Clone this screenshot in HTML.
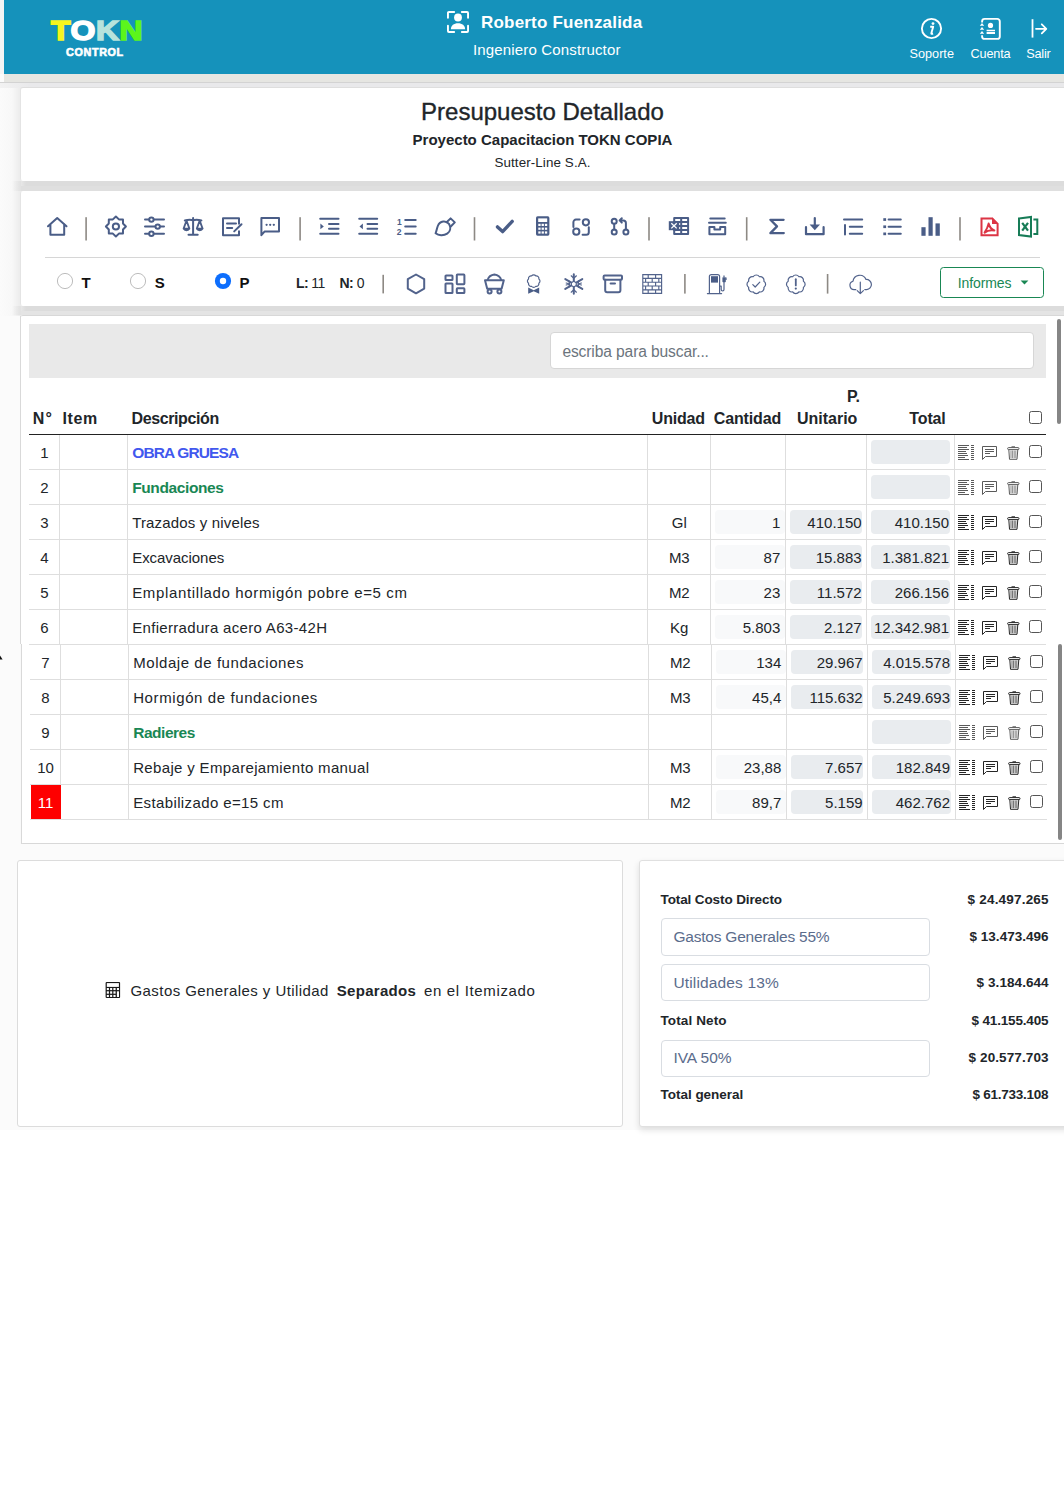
<!DOCTYPE html>
<html><head><meta charset="utf-8">
<style>
*{box-sizing:border-box;}
html,body{margin:0;padding:0;}
body{width:1064px;height:1500px;overflow:hidden;position:relative;background:#fff;font-family:"Liberation Sans",sans-serif;color:#212529;}
.abs{position:absolute;}
.t{position:absolute;white-space:nowrap;line-height:1;}
#bgpage{left:0;top:74px;width:1064px;height:1056px;background:#fbfbfb;}
#hdr{left:4px;top:0;width:1060px;height:74px;background:#1592bb;}
.card{background:#fff;border-radius:3px;}
#c1{left:20px;top:87px;width:1060px;height:94px;border-left:1px solid #e4e4e4;border-top:1px solid #dedede;}
#c2{left:20px;top:191px;width:1060px;height:115px;border-left:1px solid #e4e4e4;}
#c3{left:20px;top:315px;width:1060px;height:529px;border:1px solid #d8d8d8;border-left:none;border-right:none;}
#c4{left:17px;top:860px;width:606px;height:267px;border:1px solid #dcdcdc;}
#c5{left:639px;top:860px;width:440px;height:267px;border:1px solid #e0e0e0;box-shadow:0 3px 6px rgba(0,0,0,.12);}
svg{position:absolute;overflow:visible;}
.ic{fill:none;stroke:#4a5d87;stroke-width:2;stroke-linecap:round;stroke-linejoin:round;}
.icf{fill:#4a5d87;stroke:none;}
.div{position:absolute;width:2px;background:#8c8a88;}
</style></head>
<body>
<div id="bgpage" class="abs"></div>
<div class="abs" style="left:0;top:0;width:4px;height:74px;background:#f4f4f4;"></div>
<div class="abs" style="left:4px;top:74px;width:1060px;height:8px;background:#e6e6e2;"></div>
<div class="abs" style="left:0;top:82px;width:1064px;height:1px;background:#d3d3d3;"></div>
<div class="abs" style="left:0;top:83px;width:1064px;height:5px;background:linear-gradient(90deg,#f2f2f2 0,#e9e9eb 30px);"></div>
<div class="abs" style="left:0;top:88px;width:21px;height:228px;background:linear-gradient(90deg,#fbfbfb 0,#f8f8f8 12px,#ececec 20px);"></div>
<div class="abs" style="left:12px;top:181px;width:1052px;height:10px;background:linear-gradient(90deg,rgba(220,220,220,0) 0,#dcdcdc 14px);"></div><div class="abs" style="left:21px;top:186px;width:1043px;height:5px;background:#dfdfdf;"></div>
<div class="abs" style="left:12px;top:306px;width:1052px;height:9px;background:linear-gradient(90deg,rgba(220,220,220,0) 0,#dcdcdc 14px);"></div><div class="abs" style="left:21px;top:311px;width:1043px;height:4px;background:#e4e4e4;"></div>

<div id="hdr" class="abs">
 <!-- logo -->
 <div class="t" style="left:47px;top:17px;font-size:28px;font-weight:bold;letter-spacing:0.5px;-webkit-text-stroke:1.6px currentColor;transform:scaleX(1.14);transform-origin:0 0;">
  <span style="color:#f5f51e;-webkit-text-stroke-color:#f5f51e">T</span><span style="color:#fff;-webkit-text-stroke-color:#fff">O</span><span style="color:#b8e3dc;-webkit-text-stroke-color:#b8e3dc">K</span><span style="color:#5cf51c;-webkit-text-stroke-color:#5cf51c">N</span></div>
 <div class="t" style="left:62px;top:48px;font-size:10.2px;font-weight:bold;color:#fff;letter-spacing:0.6px;-webkit-text-stroke:0.6px #fff;transform:scaleX(1.06);transform-origin:0 0;">CONTROL</div>
 <!-- user icon -->
 <svg style="left:442.5px;top:10.5px" width="22" height="22" viewBox="0.5 0.5 23 23">
  <path d="M1.5 7.5V2.5a1 1 0 0 1 1-1H8 M16 1.5h5.5a1 1 0 0 1 1 1V7.5 M22.5 16v5.5a1 1 0 0 1-1 1H16 M8 22.5H2.5a1 1 0 0 1-1-1V16" fill="none" stroke="#fff" stroke-width="2" stroke-linecap="round"/>
  <circle cx="12" cy="7.3" r="4.1" fill="#fff"/>
  <path d="M4.6 19.6c0-3.9 3-6.2 7.4-6.2s7.4 2.3 7.4 6.2z" fill="#fff"/>
 </svg>
 <div class="t" style="left:477px;top:14px;font-size:17px;font-weight:bold;color:#fff;letter-spacing:0.2px;">Roberto Fuenzalida</div>
 <div class="t" style="left:469px;top:42px;font-size:15px;color:#fff;letter-spacing:0.16px;">Ingeniero Constructor</div>
 <!-- info -->
 <svg style="left:917px;top:18px" width="22" height="22" viewBox="0 0 22 22">
  <circle cx="10.5" cy="10.5" r="9.6" fill="none" stroke="#fff" stroke-width="1.9"/>
  <circle cx="12" cy="5.6" r="1.4" fill="#fff"/>
  <path d="M9.2 8.8h3l-1.8 6.2c-.2.7.1 1 .8.9l.9-.2" fill="none" stroke="#fff" stroke-width="1.9" stroke-linejoin="round"/>
 </svg>
 <div class="t" style="left:905.5px;top:47.8px;font-size:12.7px;color:#fff;">Soporte</div>
 <!-- cuenta -->
 <svg style="left:976px;top:18px" width="22" height="22" viewBox="0 0 22 22">
  <path d="M2.1 4.4V3.4a2.5 2.5 0 0 1 2.5-2.5h12.7a2.5 2.5 0 0 1 2.5 2.5v15a2.5 2.5 0 0 1-2.5 2.5H4.6a2.5 2.5 0 0 1-2.5-2.5v-1.2" fill="none" stroke="#fff" stroke-width="1.9"/>
  <path d="M2 4.9l2.2 2.9H-0.2z M2 8.9l2.2 2.9H-0.2z M2 13l2.2 2.7H-0.2z" fill="#fff"/>
  <circle cx="10.5" cy="7.4" r="2.6" fill="#fff"/>
  <path d="M6.6 11.8h8.4v1.5H6.6z M6.6 14h8.4v2H6.6z" fill="#fff"/>
 </svg>
 <div class="t" style="left:966.5px;top:47.8px;font-size:12.7px;color:#fff;letter-spacing:-0.15px;">Cuenta</div>
 <!-- salir -->
 <svg style="left:1027px;top:18px" width="22" height="22" viewBox="0 0 22 22">
  <path d="M1.5 1.2v18.4" fill="none" stroke="#fff" stroke-width="1.8"/>
  <path d="M5 10.8h9.8 M10.8 6.3l4.5 4.5-4.5 4.5" fill="none" stroke="#fff" stroke-width="1.8" stroke-linecap="round" stroke-linejoin="round"/>
 </svg>
 <div class="t" style="left:1022.2px;top:47.8px;font-size:12.7px;color:#fff;letter-spacing:-0.2px;">Salir</div>
</div>
<div id="c1" class="abs card">
  <div class="t" style="left:0;width:1043px;text-align:center;top:11.8px;font-size:24px;-webkit-text-stroke:0.35px #212529;">Presupuesto Detallado</div>
  <div class="t" style="left:0;width:1043px;text-align:center;top:44px;font-size:15px;font-weight:bold;">Proyecto Capacitacion TOKN COPIA</div>
  <div class="t" style="left:0;width:1043px;text-align:center;top:68px;font-size:13.4px;letter-spacing:0.1px;">Sutter-Line S.A.</div>
</div>
<div id="c2" class="abs card"></div>
<div class="abs" style="left:45px;top:257px;width:995px;height:1px;background:#d6d6d6;"></div>
<svg style="left:0;top:0" width="1064" height="320" viewBox="0 0 1064 320">
 <g fill="#8d8984">
  <rect x="85.3" y="217.2" width="1.6" height="23.3"/>
  <rect x="299.3" y="217.2" width="1.6" height="23.3"/>
  <rect x="473.7" y="217.2" width="1.6" height="23.3"/>
  <rect x="648.2" y="217.2" width="1.6" height="23.3"/>
  <rect x="745.9" y="217.2" width="1.6" height="23.3"/>
  <rect x="959.2" y="217.2" width="1.6" height="23.3"/>
  <rect x="382.4" y="274.8" width="1.6" height="18.6"/>
  <rect x="684.1" y="274.0" width="1.6" height="19.6"/>
  <rect x="826.8" y="274.0" width="1.6" height="19.6"/>
 </g>
 <g class="ic">
  <!-- home -->
  <path d="M48 226.3L57.2 218.1L66.5 226.3 M50.4 224V234.8H64.2V224"/>
  <!-- gear -->
  <path d="M115.90 216.50 L118.92 219.40 L122.98 219.42 L123.00 223.48 L125.90 226.50 L123.00 229.52 L122.98 233.58 L118.92 233.60 L115.90 236.50 L112.88 233.60 L108.82 233.58 L108.80 229.52 L105.90 226.50 L108.80 223.48 L108.82 219.42 L112.88 219.40Z"/>
  <circle cx="115.9" cy="226.5" r="3.1"/>
  <!-- sliders -->
  <path d="M145 219.6H164 M145 226.6H164 M145 233.7H164"/>
  <circle cx="151.4" cy="219.6" r="2.2" fill="#fff"/>
  <circle cx="157.7" cy="226.6" r="2.2" fill="#fff"/>
  <circle cx="151.4" cy="233.7" r="2.2" fill="#fff"/>
  <!-- scale -->
  <path d="M193.1 218V234.6 M188.5 234.8H197.7 M184.8 220.4C188 219.6 190.5 219.4 193.1 220.2C195.7 219.4 198.2 219.6 201.4 220.4"/>
  <path d="M186.5 220.6L183.6 228.6H189.4Z M199.7 220.6L196.8 228.6H202.6Z" stroke-width="1.8"/>
  <path d="M183.6 228.6C184.2 231.2 188.8 231.2 189.4 228.6Z M196.8 228.6C197.4 231.2 202 231.2 202.6 228.6Z" fill="#4a5d87" stroke-width="1.2"/>
  <!-- edit -->
  <path d="M239 223.8V218.2H223V235.3H239V231.2"/>
  <path d="M227 223.4H236 M227 228H232.2"/>
  <path d="M234.2 231.4L241.5 224.2"/>
  <!-- chat -->
  <path d="M261.4 235.2V218H279V231.6H264.5Z"/>
  <circle cx="266.6" cy="224.8" r="1.15" class="icf"/><circle cx="270.2" cy="224.8" r="1.15" class="icf"/><circle cx="273.8" cy="224.8" r="1.15" class="icf"/>
 </g>
 <g class="ic" stroke-linecap="butt" stroke-width="1.9">
  <!-- indent -->
  <path d="M320.2 218.7H338.5 M329 224.1H338.5 M329 228.8H338.5 M320.2 233.7H338.5"/>
  <path d="M320.4 223.6L323.8 226.4L320.4 229.2Z" class="icf"/>
  <!-- outdent -->
  <path d="M359.2 218.7H377.2 M367.5 224.1H377.2 M367.5 228.8H377.2 M359.2 233.7H377.2"/>
  <path d="M362.9 223.6L359.5 226.4L362.9 229.2Z" class="icf"/>
  <!-- ol -->
  <path d="M405.2 219.9H415.7 M405.2 226.6H415.7 M405.2 233.7H415.7"/>
 </g>
 <text x="397" y="224.8" font-size="8.5" font-weight="bold" fill="#4a5d87" font-family="Liberation Sans">1</text>
 <text x="396.8" y="234.8" font-size="8.5" font-weight="bold" fill="#4a5d87" font-family="Liberation Sans">2</text>
 <g class="ic">
  <!-- brush -->
  <path d="M449.2 224.2C446 220 440 220.5 437.8 226C436.8 228.6 436.6 231 435.6 233.3C438.5 235.5 443.5 236 447.2 233.6C450.2 231.6 451.2 227.8 449.2 224.2Z"/>
  <path d="M446.6 222.3L450.6 218.4L454.8 222.4L451 226.2"/>
  <!-- check -->
  <path d="M497.5 226.9L502.6 231.6L512.2 221.4" stroke-width="3.4"/>
 </g>
 <!-- calculator -->
 <rect x="536" y="216.3" width="13.4" height="19.4" rx="1.6" class="icf"/>
 <g fill="#fff">
  <rect x="538.2" y="218.4" width="9" height="3.6"/>
  <rect x="538.3" y="223.8" width="2.3" height="2.2"/><rect x="541.6" y="223.8" width="2.3" height="2.2"/><rect x="544.9" y="223.8" width="2.3" height="2.2"/>
  <rect x="538.3" y="227.6" width="2.3" height="2.2"/><rect x="541.6" y="227.6" width="2.3" height="2.2"/><rect x="544.9" y="227.6" width="2.3" height="2.2"/>
  <rect x="538.3" y="231.4" width="2.3" height="2.2"/><rect x="541.6" y="231.4" width="2.3" height="2.2"/><rect x="544.9" y="231.4" width="2.3" height="2.2"/>
 </g>
 <g class="ic">
  <!-- circles relation -->
  <circle cx="585.9" cy="222.3" r="3.1"/>
  <circle cx="576.3" cy="231.7" r="3.1"/>
  <path d="M573.4 227V222.2A2.6 2.6 0 0 1 576 219.6H579.6 M588.8 227.2V232.2A2.6 2.6 0 0 1 586.2 234.8H582.6"/>
  <!-- git pull -->
  <circle cx="614.2" cy="221.3" r="2.5"/>
  <circle cx="614.2" cy="232.1" r="2.5"/>
  <circle cx="625.9" cy="232.1" r="2.5"/>
  <path d="M614.2 223.8V229.6 M625.9 229.6V223A2.6 2.6 0 0 0 623.3 220.4H619.6 M621.8 218.2L619.6 220.4L621.8 222.6"/>
 </g>
 <!-- excel grid -->
 <g class="ic" stroke-width="1.5" stroke-linecap="butt" stroke-linejoin="miter">
  <rect x="674.2" y="217.9" width="13.9" height="16.2"/>
  <path d="M681.2 217.9V234.1 M674.2 221.9H688.1 M674.2 226H688.1 M674.2 230.1H688.1"/>
 </g>
 <rect x="668.8" y="221.2" width="10.4" height="9" class="icf"/>
 <path d="M671.3 223.2L676.7 228.4 M676.7 223.2L671.3 228.4" stroke="#fff" stroke-width="1.3"/>
 <g class="ic" stroke-linecap="butt" stroke-linejoin="miter">
  <!-- tray -->
  <path d="M710.3 218.5H724.7 M709 222.8H725.8"/>
  <path d="M709.4 227V234.3H725.2V227H720.2V229.6H714.4V227Z" stroke-width="2"/>
  <!-- sigma -->
  <path d="M783.6 219.8H770.4L777 226.4L770.4 233.1H783.8" stroke-width="2.3"/>
  <!-- download -->
  <path d="M806 227.2V234.2H823.6V227.2" stroke-width="2.2"/>
  <path d="M814.8 218V226" stroke-width="2.2"/>
 </g>
 <path d="M809.6 224.6H820L814.8 230.2Z" class="icf"/>
 <g class="ic" stroke-linecap="butt" stroke-width="1.8">
  <!-- list indent -->
  <path d="M844 219.5H862.2 M849.8 226.7H862.2 M849.8 233.8H862.2 M845 225V234.6"/>
  <!-- bullets -->
  <path d="M888.6 219.5H900.8 M888.6 226.7H900.8 M888.6 233.8H900.8"/>
 </g>
 <g class="icf">
  <rect x="883.3" y="218.2" width="2.8" height="2.7"/><rect x="883.3" y="225.4" width="2.8" height="2.7"/><rect x="883.3" y="232.5" width="2.8" height="2.7"/>
  <rect x="921.4" y="227.2" width="4.2" height="8.6"/><rect x="928.5" y="217.2" width="4.2" height="18.6"/><rect x="935.5" y="223.4" width="4.3" height="12.4"/>
 </g>
 <!-- pdf -->
 <path d="M981.5 218.5H992.3L997.6 223.8V235.2H981.5Z" fill="none" stroke="#dc3545" stroke-width="2" stroke-linejoin="miter"/>
 <path d="M992 217.6L998.5 224.1H992Z" fill="#dc3545"/>
 <path d="M988.6 223.6C989.6 227 991.6 229.4 994.4 230.4C991.4 229.9 987.6 230.2 984.6 232.6C986.5 229.6 987.9 226.8 988.6 223.6Z" fill="none" stroke="#dc3545" stroke-width="2" stroke-linejoin="round"/>
 <!-- excel -->
 <path d="M1019 218.4L1031 216.9V236.6L1019 235Z" fill="none" stroke="#177c57" stroke-width="2" stroke-linejoin="miter"/>
 <path d="M1033.4 219.6H1037.3V234H1033.4" fill="none" stroke="#177c57" stroke-width="2"/>
 <path d="M1022.2 222.8L1028 230.6 M1028 222.8L1022.2 230.6" stroke="#177c57" stroke-width="2.2"/>

 <!-- row 2 radios -->
 <circle cx="65" cy="281" r="7.6" fill="#fff" stroke="#bdbdbd" stroke-width="1"/>
 <circle cx="138" cy="281" r="7.6" fill="#fff" stroke="#bdbdbd" stroke-width="1"/>
 <circle cx="223" cy="281" r="8.1" fill="#0d6efd"/>
 <circle cx="223" cy="281" r="3.2" fill="#fff"/>
 <g class="ic" stroke-width="1.25" style="stroke:#52638c">
  <!-- hexagon -->
  <path d="M416 274.5L424.2 279.2V288.6L416 293.3L407.8 288.6V279.2Z"/>
  <!-- dashboard -->
  <rect x="445.5" y="275.4" width="7" height="4.6" rx="0.6"/>
  <rect x="445.5" y="283.4" width="7" height="9.6" rx="0.6"/>
  <rect x="456.8" y="274.6" width="7.6" height="9.6" rx="0.6"/>
  <rect x="456.8" y="288.3" width="7.6" height="4.7" rx="0.6"/>
  <!-- cart -->
  <path d="M485 280.2H503.8L501.6 288.8H487.2Z"/>
  <path d="M487.6 280C488.5 277.2 491 275 494.4 274.6C497.8 275 500.4 277.2 501.2 280"/>
  <circle cx="489.6" cy="291.6" r="2"/><circle cx="499.4" cy="291.6" r="2"/>
  <!-- award -->
  <path d="M531.56 275.93A2.60 2.60 0 0 1 535.84 275.93A2.60 2.60 0 0 1 538.87 278.96A2.60 2.60 0 0 1 538.87 283.24A2.60 2.60 0 0 1 535.84 286.27A2.60 2.60 0 0 1 531.56 286.27A2.60 2.60 0 0 1 528.53 283.24A2.60 2.60 0 0 1 528.53 278.96A2.60 2.60 0 0 1 531.56 275.93Z" stroke-width="1.2"/>
 </g>
 <path d="M528.2 287.4L533.7 290.2L539.2 287.4V293.8L533.7 291.2L528.2 293.8Z" class="icf"/>
 <g class="ic" stroke-width="1.25" style="stroke:#52638c">
  <!-- snowflake -->
  <path d="M573.8 274.2V293.8 M565.3 279.1L582.3 288.9 M565.3 288.9L582.3 279.1"/>
  <path d="M571.2 275.8L573.8 278.2L576.4 275.8 M571.2 292.2L573.8 289.8L576.4 292.2 M566.2 283L569.6 284L568.8 280.6 M581.4 285L578 284L578.8 287.4 M566.2 285L569.6 284L568.8 287.4 M581.4 283L578 284L578.8 280.6" stroke-width="1.2"/>
  <path d="M573.8 281.3L576.2 282.7V285.5L573.8 286.9L571.4 285.5V282.7Z" fill="#fff" stroke-width="1.15"/>
  <!-- archive -->
  <rect x="603.6" y="275.4" width="18.4" height="4.4" rx="1"/>
  <path d="M605.2 279.8V290.2A2 2 0 0 0 607.2 292.2H618.4A2 2 0 0 0 620.4 290.2V279.8 M610.6 283.4H615"/>
  <!-- brick -->
  <path d="M642.8 274.6H661.6V293.4H642.8Z M642.8 278.4H661.6 M642.8 282.2H661.6 M642.8 286H661.6 M642.8 289.8H661.6 M648.2 274.6V278.4 M655.6 274.6V278.4 M645.6 278.4V282.2 M652.2 278.4V282.2 M658.8 278.4V282.2 M648.2 282.2V286 M655.6 282.2V286 M645.6 286V289.8 M652.2 286V289.8 M658.8 286V289.8 M648.2 289.8V293.4 M655.6 289.8V293.4" stroke-width="1.15" stroke-linecap="butt" stroke-linejoin="miter"/>
  <!-- gas pump -->
  <path d="M709.4 293.2V276.6A2 2 0 0 1 711.4 274.6H717.6A2 2 0 0 1 719.6 276.6V293.2 M707.4 293.6H721.6" stroke-width="1.2"/>
  <path d="M719.6 286.2H721.2V289.6A1.4 1.4 0 0 0 724 289.6V281.6" stroke-width="1.2"/>
  <!-- badge check -->
  <path d="M753.16 276.72A3.70 3.70 0 0 1 759.44 276.72A3.70 3.70 0 0 1 763.88 281.16A3.70 3.70 0 0 1 763.88 287.44A3.70 3.70 0 0 1 759.44 291.88A3.70 3.70 0 0 1 753.16 291.88A3.70 3.70 0 0 1 748.72 287.44A3.70 3.70 0 0 1 748.72 281.16A3.70 3.70 0 0 1 753.16 276.72Z" stroke-width="1.2"/>
  <path d="M752.8 284.6L755.2 287L759.8 282.2" stroke-width="1.2"/>
  <!-- badge alert -->
  <path d="M792.66 276.72A3.70 3.70 0 0 1 798.94 276.72A3.70 3.70 0 0 1 803.38 281.16A3.70 3.70 0 0 1 803.38 287.44A3.70 3.70 0 0 1 798.94 291.88A3.70 3.70 0 0 1 792.66 291.88A3.70 3.70 0 0 1 788.22 287.44A3.70 3.70 0 0 1 788.22 281.16A3.70 3.70 0 0 1 792.66 276.72Z" stroke-width="1.2"/>
  <path d="M795.8 279.2V285.4" stroke-width="1.8"/>
  <!-- cloud download -->
  <path d="M855.8 289.6H854.6A4.3 4.3 0 0 1 853 281.2A6.8 6.8 0 0 1 866 279.4A4.6 4.6 0 0 1 866.6 289.6H864.8" stroke-width="1.2"/>
  <path d="M860.3 282.2V293.6 M857.2 290.6L860.3 293.6L863.4 290.6" stroke-width="1.2"/>
 </g>
 <rect x="711" y="276.2" width="7" height="6.4" class="icf"/>
 <rect x="722.4" y="277.2" width="3.4" height="5" rx="0.6" class="icf"/>
 <path d="M724 277.2V275.6 M726 280V277.6" stroke="#4a5d87" stroke-width="1.2"/>
 <circle cx="795.8" cy="288.6" r="1.1" class="icf"/>
</svg>
<div class="t" style="left:81.5px;top:274.5px;font-size:15px;font-weight:bold;color:#111;">T</div>
<div class="t" style="left:154.8px;top:274.5px;font-size:15px;font-weight:bold;color:#111;">S</div>
<div class="t" style="left:239.5px;top:274.5px;font-size:15px;font-weight:bold;color:#111;">P</div>
<div class="t" style="left:296px;top:276px;font-size:14px;color:#212529;letter-spacing:-0.6px;"><b>L:</b> 11</div>
<div class="t" style="left:339.5px;top:276px;font-size:14px;color:#212529;letter-spacing:-0.5px;"><b>N:</b> 0</div>
<div class="abs" style="left:940.2px;top:267.2px;width:103.8px;height:30.6px;border:1px solid #198754;border-radius:3.5px;"></div>
<div class="t" style="left:957.8px;top:275.6px;font-size:14px;color:#198754;letter-spacing:-0.1px;">Informes</div>
<svg style="left:1019.5px;top:279.6px" width="9" height="5" viewBox="0 0 9 5"><path d="M0.6 0.4H8.4L4.5 4.6Z" fill="#198754"/></svg>
<div id="c3" class="abs card"></div>
<div class="abs" style="left:20px;top:316px;width:1px;height:328px;background:#d9d9d9;"></div>
<div class="abs" style="left:21px;top:644px;width:1px;height:200px;background:#d9d9d9;"></div>
<div class="abs" style="left:20px;top:644px;width:1px;height:200px;background:#f9f9f9;"></div>
<div class="abs" style="left:29px;top:324px;width:1017px;height:53.7px;background:#e9e9e9;"></div>
<div class="abs" style="left:549.8px;top:332.2px;width:483.8px;height:37px;background:#fff;border:1px solid #d6d6d6;border-radius:4px;"></div>
<div class="t" style="left:562.4px;top:343.5px;font-size:15.6px;color:#6c757d;letter-spacing:-0.12px;">escriba para buscar...</div>
<div class="t" style="left:32.8px;top:410.5px;font-size:16px;font-weight:bold;color:#212529;letter-spacing:1.25px;">N°</div>
<div class="t" style="left:62.5px;top:410.5px;font-size:16px;font-weight:bold;color:#212529;letter-spacing:0.60px;">Item</div>
<div class="t" style="left:131.5px;top:410.5px;font-size:16px;font-weight:bold;color:#212529;letter-spacing:-0.39px;">Descripción</div>
<div class="t" style="left:651.8px;top:410.5px;font-size:16px;font-weight:bold;color:#212529;letter-spacing:-0.18px;">Unidad</div>
<div class="t" style="left:713.8px;top:410.5px;font-size:16px;font-weight:bold;color:#212529;letter-spacing:-0.15px;">Cantidad</div>
<div class="t" style="left:797.0px;top:410.5px;font-size:16px;font-weight:bold;color:#212529;letter-spacing:-0.01px;">Unitario</div>
<div class="t" style="left:909.3px;top:410.5px;font-size:16px;font-weight:bold;color:#212529;letter-spacing:-0.13px;">Total</div>
<div class="t" style="left:847px;top:388.5px;font-size:16px;font-weight:bold;color:#212529;">P.</div>
<div class="abs" style="left:1029.2px;top:411px;width:12.6px;height:12.6px;border:1px solid #555;border-radius:2.5px;background:#fff;"></div>
<div class="abs" style="left:29px;top:433.9px;width:1017px;height:1.3px;background:#222;"></div>
<div class="abs" style="left:29.0px;top:468.9px;width:1017px;height:1px;background:#dedede;"></div>
<div class="abs" style="left:59.0px;top:434.9px;width:1px;height:35.0px;background:#dedede;"></div>
<div class="abs" style="left:127.2px;top:434.9px;width:1px;height:35.0px;background:#dedede;"></div>
<div class="abs" style="left:647.1px;top:434.9px;width:1px;height:35.0px;background:#dedede;"></div>
<div class="abs" style="left:710.1px;top:434.9px;width:1px;height:35.0px;background:#dedede;"></div>
<div class="abs" style="left:785.1px;top:434.9px;width:1px;height:35.0px;background:#dedede;"></div>
<div class="abs" style="left:866.2px;top:434.9px;width:1px;height:35.0px;background:#dedede;"></div>
<div class="abs" style="left:954.1px;top:434.9px;width:1px;height:35.0px;background:#dedede;"></div>
<div class="t" style="left:29.5px;width:30px;text-align:center;top:445.2px;font-size:15px;color:#212529;">1</div>
<div class="t" style="left:132.2px;top:444.9px;font-size:15.5px;font-weight:bold;color:#4158ee;letter-spacing:-0.86px;">OBRA GRUESA</div>
<div class="abs" style="left:871.0px;top:440.0px;width:78.8px;height:24px;background:#e9ecef;border-radius:4px;"></div>
<div class="abs" style="left:1029.2px;top:445.2px;width:12.6px;height:12.6px;border:1px solid #555;border-radius:2.5px;background:#fff;"></div>
<div class="abs" style="left:29.0px;top:503.9px;width:1017px;height:1px;background:#dedede;"></div>
<div class="abs" style="left:59.0px;top:469.9px;width:1px;height:35.0px;background:#dedede;"></div>
<div class="abs" style="left:127.2px;top:469.9px;width:1px;height:35.0px;background:#dedede;"></div>
<div class="abs" style="left:647.1px;top:469.9px;width:1px;height:35.0px;background:#dedede;"></div>
<div class="abs" style="left:710.1px;top:469.9px;width:1px;height:35.0px;background:#dedede;"></div>
<div class="abs" style="left:785.1px;top:469.9px;width:1px;height:35.0px;background:#dedede;"></div>
<div class="abs" style="left:866.2px;top:469.9px;width:1px;height:35.0px;background:#dedede;"></div>
<div class="abs" style="left:954.1px;top:469.9px;width:1px;height:35.0px;background:#dedede;"></div>
<div class="t" style="left:29.5px;width:30px;text-align:center;top:480.2px;font-size:15px;color:#212529;">2</div>
<div class="t" style="left:132.2px;top:479.9px;font-size:15.5px;font-weight:bold;color:#198754;letter-spacing:-0.39px;">Fundaciones</div>
<div class="abs" style="left:871.0px;top:475.0px;width:78.8px;height:24px;background:#e9ecef;border-radius:4px;"></div>
<div class="abs" style="left:1029.2px;top:480.2px;width:12.6px;height:12.6px;border:1px solid #555;border-radius:2.5px;background:#fff;"></div>
<div class="abs" style="left:29.0px;top:538.9px;width:1017px;height:1px;background:#dedede;"></div>
<div class="abs" style="left:59.0px;top:504.9px;width:1px;height:35.0px;background:#dedede;"></div>
<div class="abs" style="left:127.2px;top:504.9px;width:1px;height:35.0px;background:#dedede;"></div>
<div class="abs" style="left:647.1px;top:504.9px;width:1px;height:35.0px;background:#dedede;"></div>
<div class="abs" style="left:710.1px;top:504.9px;width:1px;height:35.0px;background:#dedede;"></div>
<div class="abs" style="left:785.1px;top:504.9px;width:1px;height:35.0px;background:#dedede;"></div>
<div class="abs" style="left:866.2px;top:504.9px;width:1px;height:35.0px;background:#dedede;"></div>
<div class="abs" style="left:954.1px;top:504.9px;width:1px;height:35.0px;background:#dedede;"></div>
<div class="t" style="left:29.5px;width:30px;text-align:center;top:515.2px;font-size:15px;color:#212529;">3</div>
<div class="t" style="left:132.2px;top:515.2px;font-size:15px;color:#212529;letter-spacing:0.16px;">Trazados y niveles</div>
<div class="t" style="left:647.8px;width:63px;text-align:center;top:515.2px;font-size:15px;">Gl</div>
<div class="abs" style="left:714.5px;top:510.0px;width:70px;height:24px;background:#f8f9fa;border-radius:4px;"></div>
<div class="t" style="left:700.3px;width:80px;text-align:right;top:515.2px;font-size:15px;">1</div>
<div class="abs" style="left:790.0px;top:510.0px;width:72.3px;height:24px;background:#e9ecef;border-radius:4px;"></div>
<div class="t" style="left:771.6px;width:90px;text-align:right;top:515.2px;font-size:15px;">410.150</div>
<div class="abs" style="left:871.0px;top:510.0px;width:78.8px;height:24px;background:#e9ecef;border-radius:4px;"></div>
<div class="t" style="left:849.0px;width:100px;text-align:right;top:515.2px;font-size:15px;">410.150</div>
<div class="abs" style="left:1029.2px;top:515.2px;width:12.6px;height:12.6px;border:1px solid #555;border-radius:2.5px;background:#fff;"></div>
<div class="abs" style="left:29.0px;top:573.9px;width:1017px;height:1px;background:#dedede;"></div>
<div class="abs" style="left:59.0px;top:539.9px;width:1px;height:35.0px;background:#dedede;"></div>
<div class="abs" style="left:127.2px;top:539.9px;width:1px;height:35.0px;background:#dedede;"></div>
<div class="abs" style="left:647.1px;top:539.9px;width:1px;height:35.0px;background:#dedede;"></div>
<div class="abs" style="left:710.1px;top:539.9px;width:1px;height:35.0px;background:#dedede;"></div>
<div class="abs" style="left:785.1px;top:539.9px;width:1px;height:35.0px;background:#dedede;"></div>
<div class="abs" style="left:866.2px;top:539.9px;width:1px;height:35.0px;background:#dedede;"></div>
<div class="abs" style="left:954.1px;top:539.9px;width:1px;height:35.0px;background:#dedede;"></div>
<div class="t" style="left:29.5px;width:30px;text-align:center;top:550.2px;font-size:15px;color:#212529;">4</div>
<div class="t" style="left:132.2px;top:550.2px;font-size:15px;color:#212529;letter-spacing:-0.05px;">Excavaciones</div>
<div class="t" style="left:647.8px;width:63px;text-align:center;top:550.2px;font-size:15px;">M3</div>
<div class="abs" style="left:714.5px;top:545.0px;width:70px;height:24px;background:#f8f9fa;border-radius:4px;"></div>
<div class="t" style="left:700.3px;width:80px;text-align:right;top:550.2px;font-size:15px;">87</div>
<div class="abs" style="left:790.0px;top:545.0px;width:72.3px;height:24px;background:#e9ecef;border-radius:4px;"></div>
<div class="t" style="left:771.6px;width:90px;text-align:right;top:550.2px;font-size:15px;">15.883</div>
<div class="abs" style="left:871.0px;top:545.0px;width:78.8px;height:24px;background:#e9ecef;border-radius:4px;"></div>
<div class="t" style="left:849.0px;width:100px;text-align:right;top:550.2px;font-size:15px;">1.381.821</div>
<div class="abs" style="left:1029.2px;top:550.2px;width:12.6px;height:12.6px;border:1px solid #555;border-radius:2.5px;background:#fff;"></div>
<div class="abs" style="left:29.0px;top:608.9px;width:1017px;height:1px;background:#dedede;"></div>
<div class="abs" style="left:59.0px;top:574.9px;width:1px;height:35.0px;background:#dedede;"></div>
<div class="abs" style="left:127.2px;top:574.9px;width:1px;height:35.0px;background:#dedede;"></div>
<div class="abs" style="left:647.1px;top:574.9px;width:1px;height:35.0px;background:#dedede;"></div>
<div class="abs" style="left:710.1px;top:574.9px;width:1px;height:35.0px;background:#dedede;"></div>
<div class="abs" style="left:785.1px;top:574.9px;width:1px;height:35.0px;background:#dedede;"></div>
<div class="abs" style="left:866.2px;top:574.9px;width:1px;height:35.0px;background:#dedede;"></div>
<div class="abs" style="left:954.1px;top:574.9px;width:1px;height:35.0px;background:#dedede;"></div>
<div class="t" style="left:29.5px;width:30px;text-align:center;top:585.2px;font-size:15px;color:#212529;">5</div>
<div class="t" style="left:132.2px;top:585.2px;font-size:15px;color:#212529;letter-spacing:0.64px;">Emplantillado hormigón pobre e=5 cm</div>
<div class="t" style="left:647.8px;width:63px;text-align:center;top:585.2px;font-size:15px;">M2</div>
<div class="abs" style="left:714.5px;top:580.0px;width:70px;height:24px;background:#f8f9fa;border-radius:4px;"></div>
<div class="t" style="left:700.3px;width:80px;text-align:right;top:585.2px;font-size:15px;">23</div>
<div class="abs" style="left:790.0px;top:580.0px;width:72.3px;height:24px;background:#e9ecef;border-radius:4px;"></div>
<div class="t" style="left:771.6px;width:90px;text-align:right;top:585.2px;font-size:15px;">11.572</div>
<div class="abs" style="left:871.0px;top:580.0px;width:78.8px;height:24px;background:#e9ecef;border-radius:4px;"></div>
<div class="t" style="left:849.0px;width:100px;text-align:right;top:585.2px;font-size:15px;">266.156</div>
<div class="abs" style="left:1029.2px;top:585.2px;width:12.6px;height:12.6px;border:1px solid #555;border-radius:2.5px;background:#fff;"></div>
<div class="abs" style="left:29.0px;top:643.9px;width:1017px;height:1px;background:#dedede;"></div>
<div class="abs" style="left:59.0px;top:609.9px;width:1px;height:35.0px;background:#dedede;"></div>
<div class="abs" style="left:127.2px;top:609.9px;width:1px;height:35.0px;background:#dedede;"></div>
<div class="abs" style="left:647.1px;top:609.9px;width:1px;height:35.0px;background:#dedede;"></div>
<div class="abs" style="left:710.1px;top:609.9px;width:1px;height:35.0px;background:#dedede;"></div>
<div class="abs" style="left:785.1px;top:609.9px;width:1px;height:35.0px;background:#dedede;"></div>
<div class="abs" style="left:866.2px;top:609.9px;width:1px;height:35.0px;background:#dedede;"></div>
<div class="abs" style="left:954.1px;top:609.9px;width:1px;height:35.0px;background:#dedede;"></div>
<div class="t" style="left:29.5px;width:30px;text-align:center;top:620.2px;font-size:15px;color:#212529;">6</div>
<div class="t" style="left:132.2px;top:620.2px;font-size:15px;color:#212529;letter-spacing:0.32px;">Enfierradura acero A63-42H</div>
<div class="t" style="left:647.8px;width:63px;text-align:center;top:620.2px;font-size:15px;">Kg</div>
<div class="abs" style="left:714.5px;top:615.0px;width:70px;height:24px;background:#f8f9fa;border-radius:4px;"></div>
<div class="t" style="left:700.3px;width:80px;text-align:right;top:620.2px;font-size:15px;">5.803</div>
<div class="abs" style="left:790.0px;top:615.0px;width:72.3px;height:24px;background:#e9ecef;border-radius:4px;"></div>
<div class="t" style="left:771.6px;width:90px;text-align:right;top:620.2px;font-size:15px;">2.127</div>
<div class="abs" style="left:871.0px;top:615.0px;width:78.8px;height:24px;background:#e9ecef;border-radius:4px;"></div>
<div class="t" style="left:849.0px;width:100px;text-align:right;top:620.2px;font-size:15px;">12.342.981</div>
<div class="abs" style="left:1029.2px;top:620.2px;width:12.6px;height:12.6px;border:1px solid #555;border-radius:2.5px;background:#fff;"></div>
<div class="abs" style="left:30.0px;top:678.9px;width:1017px;height:1px;background:#dedede;"></div>
<div class="abs" style="left:60.0px;top:644.9px;width:1px;height:35.0px;background:#dedede;"></div>
<div class="abs" style="left:128.2px;top:644.9px;width:1px;height:35.0px;background:#dedede;"></div>
<div class="abs" style="left:648.1px;top:644.9px;width:1px;height:35.0px;background:#dedede;"></div>
<div class="abs" style="left:711.1px;top:644.9px;width:1px;height:35.0px;background:#dedede;"></div>
<div class="abs" style="left:786.1px;top:644.9px;width:1px;height:35.0px;background:#dedede;"></div>
<div class="abs" style="left:867.2px;top:644.9px;width:1px;height:35.0px;background:#dedede;"></div>
<div class="abs" style="left:955.1px;top:644.9px;width:1px;height:35.0px;background:#dedede;"></div>
<div class="t" style="left:30.5px;width:30px;text-align:center;top:655.2px;font-size:15px;color:#212529;">7</div>
<div class="t" style="left:133.2px;top:655.2px;font-size:15px;color:#212529;letter-spacing:0.56px;">Moldaje de fundaciones</div>
<div class="t" style="left:648.8px;width:63px;text-align:center;top:655.2px;font-size:15px;">M2</div>
<div class="abs" style="left:715.5px;top:650.0px;width:70px;height:24px;background:#f8f9fa;border-radius:4px;"></div>
<div class="t" style="left:701.3px;width:80px;text-align:right;top:655.2px;font-size:15px;">134</div>
<div class="abs" style="left:791.0px;top:650.0px;width:72.3px;height:24px;background:#e9ecef;border-radius:4px;"></div>
<div class="t" style="left:772.6px;width:90px;text-align:right;top:655.2px;font-size:15px;">29.967</div>
<div class="abs" style="left:872.0px;top:650.0px;width:78.8px;height:24px;background:#e9ecef;border-radius:4px;"></div>
<div class="t" style="left:850.0px;width:100px;text-align:right;top:655.2px;font-size:15px;">4.015.578</div>
<div class="abs" style="left:1030.2px;top:655.2px;width:12.6px;height:12.6px;border:1px solid #555;border-radius:2.5px;background:#fff;"></div>
<div class="abs" style="left:30.0px;top:713.9px;width:1017px;height:1px;background:#dedede;"></div>
<div class="abs" style="left:60.0px;top:679.9px;width:1px;height:35.0px;background:#dedede;"></div>
<div class="abs" style="left:128.2px;top:679.9px;width:1px;height:35.0px;background:#dedede;"></div>
<div class="abs" style="left:648.1px;top:679.9px;width:1px;height:35.0px;background:#dedede;"></div>
<div class="abs" style="left:711.1px;top:679.9px;width:1px;height:35.0px;background:#dedede;"></div>
<div class="abs" style="left:786.1px;top:679.9px;width:1px;height:35.0px;background:#dedede;"></div>
<div class="abs" style="left:867.2px;top:679.9px;width:1px;height:35.0px;background:#dedede;"></div>
<div class="abs" style="left:955.1px;top:679.9px;width:1px;height:35.0px;background:#dedede;"></div>
<div class="t" style="left:30.5px;width:30px;text-align:center;top:690.2px;font-size:15px;color:#212529;">8</div>
<div class="t" style="left:133.2px;top:690.2px;font-size:15px;color:#212529;letter-spacing:0.60px;">Hormigón de fundaciones</div>
<div class="t" style="left:648.8px;width:63px;text-align:center;top:690.2px;font-size:15px;">M3</div>
<div class="abs" style="left:715.5px;top:685.0px;width:70px;height:24px;background:#f8f9fa;border-radius:4px;"></div>
<div class="t" style="left:701.3px;width:80px;text-align:right;top:690.2px;font-size:15px;">45,4</div>
<div class="abs" style="left:791.0px;top:685.0px;width:72.3px;height:24px;background:#e9ecef;border-radius:4px;"></div>
<div class="t" style="left:772.6px;width:90px;text-align:right;top:690.2px;font-size:15px;">115.632</div>
<div class="abs" style="left:872.0px;top:685.0px;width:78.8px;height:24px;background:#e9ecef;border-radius:4px;"></div>
<div class="t" style="left:850.0px;width:100px;text-align:right;top:690.2px;font-size:15px;">5.249.693</div>
<div class="abs" style="left:1030.2px;top:690.2px;width:12.6px;height:12.6px;border:1px solid #555;border-radius:2.5px;background:#fff;"></div>
<div class="abs" style="left:30.0px;top:748.9px;width:1017px;height:1px;background:#dedede;"></div>
<div class="abs" style="left:60.0px;top:714.9px;width:1px;height:35.0px;background:#dedede;"></div>
<div class="abs" style="left:128.2px;top:714.9px;width:1px;height:35.0px;background:#dedede;"></div>
<div class="abs" style="left:648.1px;top:714.9px;width:1px;height:35.0px;background:#dedede;"></div>
<div class="abs" style="left:711.1px;top:714.9px;width:1px;height:35.0px;background:#dedede;"></div>
<div class="abs" style="left:786.1px;top:714.9px;width:1px;height:35.0px;background:#dedede;"></div>
<div class="abs" style="left:867.2px;top:714.9px;width:1px;height:35.0px;background:#dedede;"></div>
<div class="abs" style="left:955.1px;top:714.9px;width:1px;height:35.0px;background:#dedede;"></div>
<div class="t" style="left:30.5px;width:30px;text-align:center;top:725.2px;font-size:15px;color:#212529;">9</div>
<div class="t" style="left:133.2px;top:724.9px;font-size:15.5px;font-weight:bold;color:#198754;letter-spacing:-0.47px;">Radieres</div>
<div class="abs" style="left:872.0px;top:720.0px;width:78.8px;height:24px;background:#e9ecef;border-radius:4px;"></div>
<div class="abs" style="left:1030.2px;top:725.2px;width:12.6px;height:12.6px;border:1px solid #555;border-radius:2.5px;background:#fff;"></div>
<div class="abs" style="left:30.0px;top:783.9px;width:1017px;height:1px;background:#dedede;"></div>
<div class="abs" style="left:60.0px;top:749.9px;width:1px;height:35.0px;background:#dedede;"></div>
<div class="abs" style="left:128.2px;top:749.9px;width:1px;height:35.0px;background:#dedede;"></div>
<div class="abs" style="left:648.1px;top:749.9px;width:1px;height:35.0px;background:#dedede;"></div>
<div class="abs" style="left:711.1px;top:749.9px;width:1px;height:35.0px;background:#dedede;"></div>
<div class="abs" style="left:786.1px;top:749.9px;width:1px;height:35.0px;background:#dedede;"></div>
<div class="abs" style="left:867.2px;top:749.9px;width:1px;height:35.0px;background:#dedede;"></div>
<div class="abs" style="left:955.1px;top:749.9px;width:1px;height:35.0px;background:#dedede;"></div>
<div class="t" style="left:30.5px;width:30px;text-align:center;top:760.2px;font-size:15px;color:#212529;">10</div>
<div class="t" style="left:133.2px;top:760.2px;font-size:15px;color:#212529;letter-spacing:0.34px;">Rebaje y Emparejamiento manual</div>
<div class="t" style="left:648.8px;width:63px;text-align:center;top:760.2px;font-size:15px;">M3</div>
<div class="abs" style="left:715.5px;top:755.0px;width:70px;height:24px;background:#f8f9fa;border-radius:4px;"></div>
<div class="t" style="left:701.3px;width:80px;text-align:right;top:760.2px;font-size:15px;">23,88</div>
<div class="abs" style="left:791.0px;top:755.0px;width:72.3px;height:24px;background:#e9ecef;border-radius:4px;"></div>
<div class="t" style="left:772.6px;width:90px;text-align:right;top:760.2px;font-size:15px;">7.657</div>
<div class="abs" style="left:872.0px;top:755.0px;width:78.8px;height:24px;background:#e9ecef;border-radius:4px;"></div>
<div class="t" style="left:850.0px;width:100px;text-align:right;top:760.2px;font-size:15px;">182.849</div>
<div class="abs" style="left:1030.2px;top:760.2px;width:12.6px;height:12.6px;border:1px solid #555;border-radius:2.5px;background:#fff;"></div>
<div class="abs" style="left:30.0px;top:818.9px;width:1017px;height:1px;background:#dedede;"></div>
<div class="abs" style="left:60.0px;top:784.9px;width:1px;height:35.0px;background:#dedede;"></div>
<div class="abs" style="left:128.2px;top:784.9px;width:1px;height:35.0px;background:#dedede;"></div>
<div class="abs" style="left:648.1px;top:784.9px;width:1px;height:35.0px;background:#dedede;"></div>
<div class="abs" style="left:711.1px;top:784.9px;width:1px;height:35.0px;background:#dedede;"></div>
<div class="abs" style="left:786.1px;top:784.9px;width:1px;height:35.0px;background:#dedede;"></div>
<div class="abs" style="left:867.2px;top:784.9px;width:1px;height:35.0px;background:#dedede;"></div>
<div class="abs" style="left:955.1px;top:784.9px;width:1px;height:35.0px;background:#dedede;"></div>
<div class="abs" style="left:30.7px;top:784.6px;width:30.2px;height:34.1px;background:#fe0000;"></div>
<div class="t" style="left:30.5px;width:30px;text-align:center;top:795.2px;font-size:15px;color:#fff;">11</div>
<div class="t" style="left:133.2px;top:795.2px;font-size:15px;color:#212529;letter-spacing:0.38px;">Estabilizado e=15 cm</div>
<div class="t" style="left:648.8px;width:63px;text-align:center;top:795.2px;font-size:15px;">M2</div>
<div class="abs" style="left:715.5px;top:790.0px;width:70px;height:24px;background:#f8f9fa;border-radius:4px;"></div>
<div class="t" style="left:701.3px;width:80px;text-align:right;top:795.2px;font-size:15px;">89,7</div>
<div class="abs" style="left:791.0px;top:790.0px;width:72.3px;height:24px;background:#e9ecef;border-radius:4px;"></div>
<div class="t" style="left:772.6px;width:90px;text-align:right;top:795.2px;font-size:15px;">5.159</div>
<div class="abs" style="left:872.0px;top:790.0px;width:78.8px;height:24px;background:#e9ecef;border-radius:4px;"></div>
<div class="t" style="left:850.0px;width:100px;text-align:right;top:795.2px;font-size:15px;">462.762</div>
<div class="abs" style="left:1030.2px;top:795.2px;width:12.6px;height:12.6px;border:1px solid #555;border-radius:2.5px;background:#fff;"></div>
<svg style="left:0;top:0" width="1064" height="900" viewBox="0 0 1064 900"><rect x="958" y="445" width="11" height="1" fill="#5a5a5a"/><rect x="971" y="445" width="3" height="1" fill="#5a5a5a"/><rect x="958" y="447" width="9" height="1" fill="#5a5a5a"/><rect x="971" y="447" width="3" height="1" fill="#5a5a5a"/><rect x="958" y="449" width="11" height="1" fill="#5a5a5a"/><rect x="971" y="449" width="3" height="1" fill="#5a5a5a"/><rect x="958" y="451" width="8" height="1" fill="#5a5a5a"/><rect x="971" y="451" width="3" height="1" fill="#5a5a5a"/><rect x="958" y="453" width="9" height="1" fill="#5a5a5a"/><rect x="971" y="453" width="3" height="1" fill="#5a5a5a"/><rect x="958" y="455" width="10" height="1" fill="#5a5a5a"/><rect x="971" y="455" width="3" height="1" fill="#5a5a5a"/><rect x="958" y="457" width="7" height="1" fill="#5a5a5a"/><rect x="971" y="457" width="3" height="1" fill="#5a5a5a"/><rect x="958" y="459" width="11" height="1" fill="#5a5a5a"/><rect x="971" y="459" width="3" height="1" fill="#5a5a5a"/><path d="M982.5 459.5V446.5H996.5V456.5H985.5L982.5 459.5Z" fill="none" stroke="#5a5a5a" stroke-width="1" stroke-linejoin="miter"/><path d="M985.0 449.5H994.0 M985.0 451.5H994.0 M985.0 453.5H990.0" stroke="#5a5a5a" stroke-width="1"/><rect x="1007.6" y="447.6" width="11.4" height="2" rx="1" fill="none" stroke="#5a5a5a" stroke-width="1"/><path d="M1011.5 446.8H1015.0" stroke="#5a5a5a" stroke-width="1"/><path d="M1008.8 449.6L1009.5 459.3H1017.0L1017.8 449.6" fill="none" stroke="#5a5a5a" stroke-width="1"/><path d="M1011.0 450.5V458.2 M1012.6 450.5V458.2 M1014.2 450.5V458.2 M1015.8 450.5V458.2" stroke="#5a5a5a" stroke-width="0.7"/><rect x="958" y="480" width="11" height="1" fill="#5a5a5a"/><rect x="971" y="480" width="3" height="1" fill="#5a5a5a"/><rect x="958" y="482" width="9" height="1" fill="#5a5a5a"/><rect x="971" y="482" width="3" height="1" fill="#5a5a5a"/><rect x="958" y="484" width="11" height="1" fill="#5a5a5a"/><rect x="971" y="484" width="3" height="1" fill="#5a5a5a"/><rect x="958" y="486" width="8" height="1" fill="#5a5a5a"/><rect x="971" y="486" width="3" height="1" fill="#5a5a5a"/><rect x="958" y="488" width="9" height="1" fill="#5a5a5a"/><rect x="971" y="488" width="3" height="1" fill="#5a5a5a"/><rect x="958" y="490" width="10" height="1" fill="#5a5a5a"/><rect x="971" y="490" width="3" height="1" fill="#5a5a5a"/><rect x="958" y="492" width="7" height="1" fill="#5a5a5a"/><rect x="971" y="492" width="3" height="1" fill="#5a5a5a"/><rect x="958" y="494" width="11" height="1" fill="#5a5a5a"/><rect x="971" y="494" width="3" height="1" fill="#5a5a5a"/><path d="M982.5 494.5V481.5H996.5V491.5H985.5L982.5 494.5Z" fill="none" stroke="#5a5a5a" stroke-width="1" stroke-linejoin="miter"/><path d="M985.0 484.5H994.0 M985.0 486.5H994.0 M985.0 488.5H990.0" stroke="#5a5a5a" stroke-width="1"/><rect x="1007.6" y="482.6" width="11.4" height="2" rx="1" fill="none" stroke="#5a5a5a" stroke-width="1"/><path d="M1011.5 481.8H1015.0" stroke="#5a5a5a" stroke-width="1"/><path d="M1008.8 484.6L1009.5 494.3H1017.0L1017.8 484.6" fill="none" stroke="#5a5a5a" stroke-width="1"/><path d="M1011.0 485.5V493.2 M1012.6 485.5V493.2 M1014.2 485.5V493.2 M1015.8 485.5V493.2" stroke="#5a5a5a" stroke-width="0.7"/><rect x="958" y="515" width="11" height="1" fill="#262626"/><rect x="971" y="515" width="3" height="1" fill="#262626"/><rect x="958" y="517" width="9" height="1" fill="#262626"/><rect x="971" y="517" width="3" height="1" fill="#262626"/><rect x="958" y="519" width="11" height="1" fill="#262626"/><rect x="971" y="519" width="3" height="1" fill="#262626"/><rect x="958" y="521" width="8" height="1" fill="#262626"/><rect x="971" y="521" width="3" height="1" fill="#262626"/><rect x="958" y="523" width="9" height="1" fill="#262626"/><rect x="971" y="523" width="3" height="1" fill="#262626"/><rect x="958" y="525" width="10" height="1" fill="#262626"/><rect x="971" y="525" width="3" height="1" fill="#262626"/><rect x="958" y="527" width="7" height="1" fill="#262626"/><rect x="971" y="527" width="3" height="1" fill="#262626"/><rect x="958" y="529" width="11" height="1" fill="#262626"/><rect x="971" y="529" width="3" height="1" fill="#262626"/><path d="M982.5 529.5V516.5H996.5V526.5H985.5L982.5 529.5Z" fill="none" stroke="#262626" stroke-width="1" stroke-linejoin="miter"/><path d="M985.0 519.5H994.0 M985.0 521.5H994.0 M985.0 523.5H990.0" stroke="#262626" stroke-width="1"/><rect x="1007.6" y="517.6" width="11.4" height="2" rx="1" fill="none" stroke="#262626" stroke-width="1"/><path d="M1011.5 516.8H1015.0" stroke="#262626" stroke-width="1"/><path d="M1008.8 519.6L1009.5 529.3H1017.0L1017.8 519.6" fill="none" stroke="#262626" stroke-width="1"/><path d="M1011.0 520.5V528.2 M1012.6 520.5V528.2 M1014.2 520.5V528.2 M1015.8 520.5V528.2" stroke="#262626" stroke-width="0.7"/><rect x="958" y="550" width="11" height="1" fill="#262626"/><rect x="971" y="550" width="3" height="1" fill="#262626"/><rect x="958" y="552" width="9" height="1" fill="#262626"/><rect x="971" y="552" width="3" height="1" fill="#262626"/><rect x="958" y="554" width="11" height="1" fill="#262626"/><rect x="971" y="554" width="3" height="1" fill="#262626"/><rect x="958" y="556" width="8" height="1" fill="#262626"/><rect x="971" y="556" width="3" height="1" fill="#262626"/><rect x="958" y="558" width="9" height="1" fill="#262626"/><rect x="971" y="558" width="3" height="1" fill="#262626"/><rect x="958" y="560" width="10" height="1" fill="#262626"/><rect x="971" y="560" width="3" height="1" fill="#262626"/><rect x="958" y="562" width="7" height="1" fill="#262626"/><rect x="971" y="562" width="3" height="1" fill="#262626"/><rect x="958" y="564" width="11" height="1" fill="#262626"/><rect x="971" y="564" width="3" height="1" fill="#262626"/><path d="M982.5 564.5V551.5H996.5V561.5H985.5L982.5 564.5Z" fill="none" stroke="#262626" stroke-width="1" stroke-linejoin="miter"/><path d="M985.0 554.5H994.0 M985.0 556.5H994.0 M985.0 558.5H990.0" stroke="#262626" stroke-width="1"/><rect x="1007.6" y="552.6" width="11.4" height="2" rx="1" fill="none" stroke="#262626" stroke-width="1"/><path d="M1011.5 551.8H1015.0" stroke="#262626" stroke-width="1"/><path d="M1008.8 554.6L1009.5 564.3H1017.0L1017.8 554.6" fill="none" stroke="#262626" stroke-width="1"/><path d="M1011.0 555.5V563.2 M1012.6 555.5V563.2 M1014.2 555.5V563.2 M1015.8 555.5V563.2" stroke="#262626" stroke-width="0.7"/><rect x="958" y="585" width="11" height="1" fill="#262626"/><rect x="971" y="585" width="3" height="1" fill="#262626"/><rect x="958" y="587" width="9" height="1" fill="#262626"/><rect x="971" y="587" width="3" height="1" fill="#262626"/><rect x="958" y="589" width="11" height="1" fill="#262626"/><rect x="971" y="589" width="3" height="1" fill="#262626"/><rect x="958" y="591" width="8" height="1" fill="#262626"/><rect x="971" y="591" width="3" height="1" fill="#262626"/><rect x="958" y="593" width="9" height="1" fill="#262626"/><rect x="971" y="593" width="3" height="1" fill="#262626"/><rect x="958" y="595" width="10" height="1" fill="#262626"/><rect x="971" y="595" width="3" height="1" fill="#262626"/><rect x="958" y="597" width="7" height="1" fill="#262626"/><rect x="971" y="597" width="3" height="1" fill="#262626"/><rect x="958" y="599" width="11" height="1" fill="#262626"/><rect x="971" y="599" width="3" height="1" fill="#262626"/><path d="M982.5 599.5V586.5H996.5V596.5H985.5L982.5 599.5Z" fill="none" stroke="#262626" stroke-width="1" stroke-linejoin="miter"/><path d="M985.0 589.5H994.0 M985.0 591.5H994.0 M985.0 593.5H990.0" stroke="#262626" stroke-width="1"/><rect x="1007.6" y="587.6" width="11.4" height="2" rx="1" fill="none" stroke="#262626" stroke-width="1"/><path d="M1011.5 586.8H1015.0" stroke="#262626" stroke-width="1"/><path d="M1008.8 589.6L1009.5 599.3H1017.0L1017.8 589.6" fill="none" stroke="#262626" stroke-width="1"/><path d="M1011.0 590.5V598.2 M1012.6 590.5V598.2 M1014.2 590.5V598.2 M1015.8 590.5V598.2" stroke="#262626" stroke-width="0.7"/><rect x="958" y="620" width="11" height="1" fill="#262626"/><rect x="971" y="620" width="3" height="1" fill="#262626"/><rect x="958" y="622" width="9" height="1" fill="#262626"/><rect x="971" y="622" width="3" height="1" fill="#262626"/><rect x="958" y="624" width="11" height="1" fill="#262626"/><rect x="971" y="624" width="3" height="1" fill="#262626"/><rect x="958" y="626" width="8" height="1" fill="#262626"/><rect x="971" y="626" width="3" height="1" fill="#262626"/><rect x="958" y="628" width="9" height="1" fill="#262626"/><rect x="971" y="628" width="3" height="1" fill="#262626"/><rect x="958" y="630" width="10" height="1" fill="#262626"/><rect x="971" y="630" width="3" height="1" fill="#262626"/><rect x="958" y="632" width="7" height="1" fill="#262626"/><rect x="971" y="632" width="3" height="1" fill="#262626"/><rect x="958" y="634" width="11" height="1" fill="#262626"/><rect x="971" y="634" width="3" height="1" fill="#262626"/><path d="M982.5 634.5V621.5H996.5V631.5H985.5L982.5 634.5Z" fill="none" stroke="#262626" stroke-width="1" stroke-linejoin="miter"/><path d="M985.0 624.5H994.0 M985.0 626.5H994.0 M985.0 628.5H990.0" stroke="#262626" stroke-width="1"/><rect x="1007.6" y="622.6" width="11.4" height="2" rx="1" fill="none" stroke="#262626" stroke-width="1"/><path d="M1011.5 621.8H1015.0" stroke="#262626" stroke-width="1"/><path d="M1008.8 624.6L1009.5 634.3H1017.0L1017.8 624.6" fill="none" stroke="#262626" stroke-width="1"/><path d="M1011.0 625.5V633.2 M1012.6 625.5V633.2 M1014.2 625.5V633.2 M1015.8 625.5V633.2" stroke="#262626" stroke-width="0.7"/><rect x="959" y="655" width="11" height="1" fill="#262626"/><rect x="972" y="655" width="3" height="1" fill="#262626"/><rect x="959" y="657" width="9" height="1" fill="#262626"/><rect x="972" y="657" width="3" height="1" fill="#262626"/><rect x="959" y="659" width="11" height="1" fill="#262626"/><rect x="972" y="659" width="3" height="1" fill="#262626"/><rect x="959" y="661" width="8" height="1" fill="#262626"/><rect x="972" y="661" width="3" height="1" fill="#262626"/><rect x="959" y="663" width="9" height="1" fill="#262626"/><rect x="972" y="663" width="3" height="1" fill="#262626"/><rect x="959" y="665" width="10" height="1" fill="#262626"/><rect x="972" y="665" width="3" height="1" fill="#262626"/><rect x="959" y="667" width="7" height="1" fill="#262626"/><rect x="972" y="667" width="3" height="1" fill="#262626"/><rect x="959" y="669" width="11" height="1" fill="#262626"/><rect x="972" y="669" width="3" height="1" fill="#262626"/><path d="M983.5 669.5V656.5H997.5V666.5H986.5L983.5 669.5Z" fill="none" stroke="#262626" stroke-width="1" stroke-linejoin="miter"/><path d="M986.0 659.5H995.0 M986.0 661.5H995.0 M986.0 663.5H991.0" stroke="#262626" stroke-width="1"/><rect x="1008.6" y="657.6" width="11.4" height="2" rx="1" fill="none" stroke="#262626" stroke-width="1"/><path d="M1012.5 656.8H1016.0" stroke="#262626" stroke-width="1"/><path d="M1009.8 659.6L1010.5 669.3H1018.0L1018.8 659.6" fill="none" stroke="#262626" stroke-width="1"/><path d="M1012.0 660.5V668.2 M1013.6 660.5V668.2 M1015.2 660.5V668.2 M1016.8 660.5V668.2" stroke="#262626" stroke-width="0.7"/><rect x="959" y="690" width="11" height="1" fill="#262626"/><rect x="972" y="690" width="3" height="1" fill="#262626"/><rect x="959" y="692" width="9" height="1" fill="#262626"/><rect x="972" y="692" width="3" height="1" fill="#262626"/><rect x="959" y="694" width="11" height="1" fill="#262626"/><rect x="972" y="694" width="3" height="1" fill="#262626"/><rect x="959" y="696" width="8" height="1" fill="#262626"/><rect x="972" y="696" width="3" height="1" fill="#262626"/><rect x="959" y="698" width="9" height="1" fill="#262626"/><rect x="972" y="698" width="3" height="1" fill="#262626"/><rect x="959" y="700" width="10" height="1" fill="#262626"/><rect x="972" y="700" width="3" height="1" fill="#262626"/><rect x="959" y="702" width="7" height="1" fill="#262626"/><rect x="972" y="702" width="3" height="1" fill="#262626"/><rect x="959" y="704" width="11" height="1" fill="#262626"/><rect x="972" y="704" width="3" height="1" fill="#262626"/><path d="M983.5 704.5V691.5H997.5V701.5H986.5L983.5 704.5Z" fill="none" stroke="#262626" stroke-width="1" stroke-linejoin="miter"/><path d="M986.0 694.5H995.0 M986.0 696.5H995.0 M986.0 698.5H991.0" stroke="#262626" stroke-width="1"/><rect x="1008.6" y="692.6" width="11.4" height="2" rx="1" fill="none" stroke="#262626" stroke-width="1"/><path d="M1012.5 691.8H1016.0" stroke="#262626" stroke-width="1"/><path d="M1009.8 694.6L1010.5 704.3H1018.0L1018.8 694.6" fill="none" stroke="#262626" stroke-width="1"/><path d="M1012.0 695.5V703.2 M1013.6 695.5V703.2 M1015.2 695.5V703.2 M1016.8 695.5V703.2" stroke="#262626" stroke-width="0.7"/><rect x="959" y="725" width="11" height="1" fill="#5a5a5a"/><rect x="972" y="725" width="3" height="1" fill="#5a5a5a"/><rect x="959" y="727" width="9" height="1" fill="#5a5a5a"/><rect x="972" y="727" width="3" height="1" fill="#5a5a5a"/><rect x="959" y="729" width="11" height="1" fill="#5a5a5a"/><rect x="972" y="729" width="3" height="1" fill="#5a5a5a"/><rect x="959" y="731" width="8" height="1" fill="#5a5a5a"/><rect x="972" y="731" width="3" height="1" fill="#5a5a5a"/><rect x="959" y="733" width="9" height="1" fill="#5a5a5a"/><rect x="972" y="733" width="3" height="1" fill="#5a5a5a"/><rect x="959" y="735" width="10" height="1" fill="#5a5a5a"/><rect x="972" y="735" width="3" height="1" fill="#5a5a5a"/><rect x="959" y="737" width="7" height="1" fill="#5a5a5a"/><rect x="972" y="737" width="3" height="1" fill="#5a5a5a"/><rect x="959" y="739" width="11" height="1" fill="#5a5a5a"/><rect x="972" y="739" width="3" height="1" fill="#5a5a5a"/><path d="M983.5 739.5V726.5H997.5V736.5H986.5L983.5 739.5Z" fill="none" stroke="#5a5a5a" stroke-width="1" stroke-linejoin="miter"/><path d="M986.0 729.5H995.0 M986.0 731.5H995.0 M986.0 733.5H991.0" stroke="#5a5a5a" stroke-width="1"/><rect x="1008.6" y="727.6" width="11.4" height="2" rx="1" fill="none" stroke="#5a5a5a" stroke-width="1"/><path d="M1012.5 726.8H1016.0" stroke="#5a5a5a" stroke-width="1"/><path d="M1009.8 729.6L1010.5 739.3H1018.0L1018.8 729.6" fill="none" stroke="#5a5a5a" stroke-width="1"/><path d="M1012.0 730.5V738.2 M1013.6 730.5V738.2 M1015.2 730.5V738.2 M1016.8 730.5V738.2" stroke="#5a5a5a" stroke-width="0.7"/><rect x="959" y="760" width="11" height="1" fill="#262626"/><rect x="972" y="760" width="3" height="1" fill="#262626"/><rect x="959" y="762" width="9" height="1" fill="#262626"/><rect x="972" y="762" width="3" height="1" fill="#262626"/><rect x="959" y="764" width="11" height="1" fill="#262626"/><rect x="972" y="764" width="3" height="1" fill="#262626"/><rect x="959" y="766" width="8" height="1" fill="#262626"/><rect x="972" y="766" width="3" height="1" fill="#262626"/><rect x="959" y="768" width="9" height="1" fill="#262626"/><rect x="972" y="768" width="3" height="1" fill="#262626"/><rect x="959" y="770" width="10" height="1" fill="#262626"/><rect x="972" y="770" width="3" height="1" fill="#262626"/><rect x="959" y="772" width="7" height="1" fill="#262626"/><rect x="972" y="772" width="3" height="1" fill="#262626"/><rect x="959" y="774" width="11" height="1" fill="#262626"/><rect x="972" y="774" width="3" height="1" fill="#262626"/><path d="M983.5 774.5V761.5H997.5V771.5H986.5L983.5 774.5Z" fill="none" stroke="#262626" stroke-width="1" stroke-linejoin="miter"/><path d="M986.0 764.5H995.0 M986.0 766.5H995.0 M986.0 768.5H991.0" stroke="#262626" stroke-width="1"/><rect x="1008.6" y="762.6" width="11.4" height="2" rx="1" fill="none" stroke="#262626" stroke-width="1"/><path d="M1012.5 761.8H1016.0" stroke="#262626" stroke-width="1"/><path d="M1009.8 764.6L1010.5 774.3H1018.0L1018.8 764.6" fill="none" stroke="#262626" stroke-width="1"/><path d="M1012.0 765.5V773.2 M1013.6 765.5V773.2 M1015.2 765.5V773.2 M1016.8 765.5V773.2" stroke="#262626" stroke-width="0.7"/><rect x="959" y="795" width="11" height="1" fill="#262626"/><rect x="972" y="795" width="3" height="1" fill="#262626"/><rect x="959" y="797" width="9" height="1" fill="#262626"/><rect x="972" y="797" width="3" height="1" fill="#262626"/><rect x="959" y="799" width="11" height="1" fill="#262626"/><rect x="972" y="799" width="3" height="1" fill="#262626"/><rect x="959" y="801" width="8" height="1" fill="#262626"/><rect x="972" y="801" width="3" height="1" fill="#262626"/><rect x="959" y="803" width="9" height="1" fill="#262626"/><rect x="972" y="803" width="3" height="1" fill="#262626"/><rect x="959" y="805" width="10" height="1" fill="#262626"/><rect x="972" y="805" width="3" height="1" fill="#262626"/><rect x="959" y="807" width="7" height="1" fill="#262626"/><rect x="972" y="807" width="3" height="1" fill="#262626"/><rect x="959" y="809" width="11" height="1" fill="#262626"/><rect x="972" y="809" width="3" height="1" fill="#262626"/><path d="M983.5 809.5V796.5H997.5V806.5H986.5L983.5 809.5Z" fill="none" stroke="#262626" stroke-width="1" stroke-linejoin="miter"/><path d="M986.0 799.5H995.0 M986.0 801.5H995.0 M986.0 803.5H991.0" stroke="#262626" stroke-width="1"/><rect x="1008.6" y="797.6" width="11.4" height="2" rx="1" fill="none" stroke="#262626" stroke-width="1"/><path d="M1012.5 796.8H1016.0" stroke="#262626" stroke-width="1"/><path d="M1009.8 799.6L1010.5 809.3H1018.0L1018.8 799.6" fill="none" stroke="#262626" stroke-width="1"/><path d="M1012.0 800.5V808.2 M1013.6 800.5V808.2 M1015.2 800.5V808.2 M1016.8 800.5V808.2" stroke="#262626" stroke-width="0.7"/></svg>
<div class="abs" style="left:1057px;top:319px;width:4px;height:105px;background:#858585;border-radius:2px;"></div>
<div class="abs" style="left:1058px;top:644px;width:4px;height:196px;background:#858585;border-radius:2px;"></div>
<!-- cursor mark --><svg style="left:0;top:650px" width="6" height="12" viewBox="0 0 6 12"><path d="M0 5.5L2.6 9.6H0Z" fill="#111"/></svg><div id="c4" class="abs card"></div>
<div id="c5" class="abs card"></div>
<div class="abs" style="left:660.5px;top:918.0px;width:269.2px;height:37.6px;border:1px solid #d9dde2;border-radius:4px;background:#fff;"></div>
<div class="abs" style="left:660.5px;top:964.4px;width:269.2px;height:37.1px;border:1px solid #d9dde2;border-radius:4px;background:#fff;"></div>
<div class="abs" style="left:660.5px;top:1039.5px;width:269.2px;height:37.1px;border:1px solid #d9dde2;border-radius:4px;background:#fff;"></div>
<div class="t" style="left:130.5px;top:983.0px;font-size:15px;font-weight:normal;color:#212529;letter-spacing:0.43px;">Gastos Generales y Utilidad</div>
<div class="t" style="left:336.8px;top:983.0px;font-size:15px;font-weight:bold;color:#212529;letter-spacing:0.29px;">Separados</div>
<div class="t" style="left:424.0px;top:983.0px;font-size:15px;font-weight:normal;color:#212529;letter-spacing:0.66px;">en el Itemizado</div>
<div class="t" style="left:660.5px;top:892.7px;font-size:13.5px;font-weight:bold;color:#212529;letter-spacing:-0.11px;">Total Costo Directo</div>
<div class="t" style="left:848.8px;width:200px;text-align:right;top:892.7px;font-size:13.5px;font-weight:bold;color:#212529;letter-spacing:0.20px;margin-right:0;">$ 24.497.265</div>
<div class="t" style="left:848.6px;width:200px;text-align:right;top:929.7px;font-size:13.5px;font-weight:bold;color:#212529;letter-spacing:0.02px;margin-right:0;">$ 13.473.496</div>
<div class="t" style="left:848.7px;width:200px;text-align:right;top:975.7px;font-size:13.5px;font-weight:bold;color:#212529;letter-spacing:0.07px;margin-right:0;">$ 3.184.644</div>
<div class="t" style="left:660.5px;top:1013.7px;font-size:13.5px;font-weight:bold;color:#212529;letter-spacing:0.11px;">Total Neto</div>
<div class="t" style="left:848.4px;width:200px;text-align:right;top:1013.7px;font-size:13.5px;font-weight:bold;color:#212529;letter-spacing:-0.17px;margin-right:0;">$ 41.155.405</div>
<div class="t" style="left:848.7px;width:200px;text-align:right;top:1050.7px;font-size:13.5px;font-weight:bold;color:#212529;letter-spacing:0.11px;margin-right:0;">$ 20.577.703</div>
<div class="t" style="left:660.5px;top:1088.2px;font-size:13.5px;font-weight:bold;color:#212529;letter-spacing:-0.02px;">Total general</div>
<div class="t" style="left:848.3px;width:200px;text-align:right;top:1088.2px;font-size:13.5px;font-weight:bold;color:#212529;letter-spacing:-0.26px;margin-right:0;">$ 61.733.108</div>
<div class="t" style="left:673.4px;top:929.0px;font-size:15.5px;font-weight:normal;color:#5b6c8c;letter-spacing:-0.21px;">Gastos Generales 55%</div>
<div class="t" style="left:673.4px;top:975.0px;font-size:15.5px;font-weight:normal;color:#5b6c8c;letter-spacing:0.15px;">Utilidades 13%</div>
<div class="t" style="left:673.4px;top:1050.0px;font-size:15.5px;font-weight:normal;color:#5b6c8c;letter-spacing:-0.03px;">IVA 50%</div>
<svg style="left:0;top:0" width="1064" height="1100" viewBox="0 0 1064 1100">
<rect x="105.6" y="981.9" width="14.5" height="16" rx="1" fill="#1a1a1a"/>
<rect x="106.8" y="983.1" width="12.1" height="3.8" fill="#fff"/>
<rect x="106.8" y="988.0" width="2.1" height="2.1" fill="#fff"/><rect x="110.1" y="988.0" width="2.1" height="2.1" fill="#fff"/><rect x="113.4" y="988.0" width="2.2" height="2.1" fill="#fff"/><rect x="116.9" y="988.0" width="2.1" height="2.1" fill="#fff"/><rect x="106.8" y="991.3" width="2.1" height="2.4" fill="#fff"/><rect x="110.1" y="991.3" width="2.1" height="2.4" fill="#fff"/><rect x="113.4" y="991.3" width="2.2" height="2.4" fill="#fff"/><rect x="116.9" y="991.3" width="2.1" height="5.7" fill="#fff"/><rect x="106.8" y="994.9" width="2.1" height="2.1" fill="#fff"/><rect x="110.1" y="994.9" width="2.1" height="2.1" fill="#fff"/><rect x="113.4" y="994.9" width="2.2" height="2.1" fill="#fff"/>
</svg></body></html>
